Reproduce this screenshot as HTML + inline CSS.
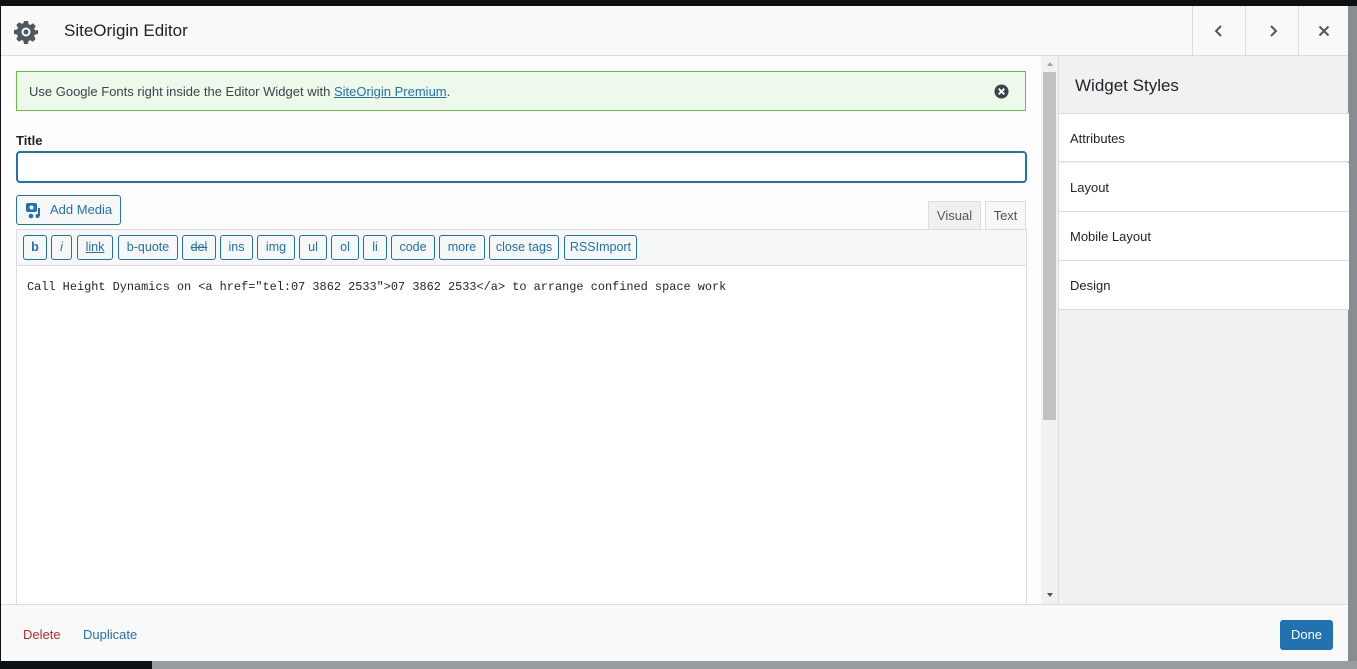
<!DOCTYPE html>
<html><head><meta charset="utf-8"><style>
*{box-sizing:border-box;margin:0;padding:0}
body{width:1357px;height:669px;background:#0e1114;position:relative;overflow:hidden;font-family:"Liberation Sans",sans-serif;font-size:13px;color:#1d2327}
.abs{position:absolute}
.bgR{left:1348px;top:6px;width:9px;height:663px;background:#8a8d90}
.bgB{left:152px;top:661px;width:1205px;height:8px;background:#9a9da0}
.modal{left:1px;top:6px;width:1347px;height:655px;background:#f9f9f9}
.hdr{left:0;top:0;width:1347px;height:50px;border-bottom:1px solid #dcdcde;background:#f9f9f9}
.hb{top:0;height:49px;border-left:1px solid #dcdcde;display:flex;align-items:center;justify-content:center;color:#50575e}
.main{left:0;top:50px;width:1040px;height:548px;background:#fdfdfd}
.sb{left:1040px;top:50px;width:17px;height:548px;background:#f1f1f1}
.side{left:1057px;top:50px;width:290px;height:548px;background:#f1f1f1;border-left:1px solid #dcdcde}
.si{left:0;width:290px;height:49px;background:#fff;border-bottom:1px solid #dcdcde;padding-left:11px;line-height:49px;font-size:13px;color:#1d2327}
.btn{position:absolute;top:235px;height:25px;border:1px solid #2271b1;border-radius:3px;color:#2271b1;background:#f6f7f7;font-size:12.5px;line-height:23px;text-align:center}
.foot{left:0;top:598px;width:1347px;height:57px;border-top:1px solid #dcdcde;background:#f9f9f9}
</style></head><body>
<div class="abs bgR"></div><div class="abs bgB"></div>
<div class="abs modal">
 <div class="abs hdr">
  <svg class="abs" style="left:13px;top:14px" width="24" height="24" viewBox="0 0 24 24"><path fill="#50575e" fill-rule="evenodd" d="M10 1h4l.6 3.1 1.7.9 2.7-1.7 2.8 2.8-1.7 2.7.9 1.7L24 10v4l-3.1.6-.9 1.7 1.7 2.7-2.8 2.8-2.7-1.7-1.7.9L14 24h-4l-.6-3.1-1.7-.9-2.7 1.7-2.8-2.8 1.7-2.7-.9-1.7L0 14v-4l3.1-.6.9-1.7L2.3 5 5.1 2.2l2.7 1.7 1.7-.9zM12 7.5a4.5 4.5 0 1 0 0 9 4.5 4.5 0 0 0 0-9zM12 9.5a2.5 2.5 0 1 1 0 5 2.5 2.5 0 0 1 0-5z"/></svg>
  <div class="abs" style="left:63px;top:15px;font-size:17px;font-weight:500;color:#1d2327">SiteOrigin Editor</div>
  <div class="abs hb" style="left:1191px;width:53px"><svg width="12" height="14" viewBox="0 0 12 14"><path d="M8 2 3 7l5 5" stroke="#50575e" stroke-width="2" fill="none"/></svg></div>
  <div class="abs hb" style="left:1244px;width:54px"><svg width="12" height="14" viewBox="0 0 12 14"><path d="M4 2l5 5-5 5" stroke="#50575e" stroke-width="2" fill="none"/></svg></div>
  <div class="abs hb" style="left:1297px;width:50px"><svg width="12" height="12" viewBox="0 0 12 12"><path d="M1.5 1.5l9 9M10.5 1.5l-9 9" stroke="#50575e" stroke-width="2"/></svg></div>
 </div>
 <div class="abs main"></div>
 <div class="abs sb"><div style="position:absolute;left:6px;top:6px;border:3px solid transparent;border-bottom:4px solid #a3a3a3;border-top:0"></div><div style="position:absolute;left:2px;top:16px;width:13px;height:348px;background:#c1c1c1"></div><div style="position:absolute;left:6px;top:537px;border:3px solid transparent;border-top:4px solid #505050;border-bottom:0"></div></div>
 <div class="abs side">
  <div class="abs" style="left:16px;top:20px;font-size:17px;color:#1d2327">Widget Styles</div>
  <div class="abs si" style="top:57px;border-top:1px solid #dcdcde">Attributes</div>
  <div class="abs si" style="top:107px">Layout</div>
  <div class="abs si" style="top:156px">Mobile Layout</div>
  <div class="abs si" style="top:205px">Design</div>
 </div>
 <div class="abs" style="left:15px;top:65px;width:1010px;height:40px;background:#edfaeb;border:1px solid #68c13f"></div>
 <div class="abs" style="left:28px;top:78px;color:#3c434a">Use Google Fonts right inside the Editor Widget with <span style="color:#2271b1;text-decoration:underline">SiteOrigin Premium</span>.</div>
 <svg class="abs" style="left:993px;top:78px" width="15" height="15" viewBox="0 0 16 16"><circle cx="8" cy="8" r="7.5" fill="#3c434a"/><path d="M5 5l6 6M11 5l-6 6" stroke="#fff" stroke-width="2"/></svg>
 <div class="abs" style="left:15px;top:127px;font-weight:bold;color:#1d2327">Title</div>
 <div class="abs" style="left:15px;top:145px;width:1011px;height:32px;border:2px solid #2271b1;border-radius:4px;background:#fff"></div>
 <div class="abs" style="left:15px;top:189px;width:105px;height:30px;border:1px solid #2271b1;border-radius:3px;background:#f6f7f7;color:#2271b1;line-height:28px;padding-left:33px">Add Media</div>
 <svg class="abs" style="left:25px;top:196px" width="18" height="17" viewBox="0 0 18 17"><rect x="0" y="1" width="11" height="9" rx="2" fill="#2271b1"/><circle cx="5.5" cy="5.5" r="2" fill="#fff"/><path d="M13 6v8" stroke="#2271b1" stroke-width="2"/><circle cx="11.5" cy="14" r="2" fill="#2271b1"/><circle cx="5" cy="14" r="2.3" fill="#2271b1"/></svg>
 <div class="abs" style="left:927px;top:195px;width:53px;height:29px;background:#f0f0f1;border:1px solid #dcdcde;border-bottom:0;color:#50575e;text-align:center;line-height:28px">Visual</div>
 <div class="abs" style="left:984px;top:195px;width:41px;height:30px;background:#f6f7f7;border:1px solid #dcdcde;border-bottom:0;color:#50575e;text-align:center;line-height:28px">Text</div>
 <div class="abs" style="left:15px;top:223px;width:1011px;height:376px;border:1px solid #dcdcde;background:#fff"></div>
 <div class="abs" style="left:16px;top:224px;width:1009px;height:36px;background:#f6f7f7;border-bottom:1px solid #dcdcde"></div>
</div>
<div class="btn" style="left:23px;width:24px;font-weight:bold">b</div>
<div class="btn" style="left:51px;width:21px;font-style:italic">i</div>
<div class="btn" style="left:77px;width:36px;text-decoration:underline">link</div>
<div class="btn" style="left:118px;width:60px">b-quote</div>
<div class="btn" style="left:182px;width:34px;text-decoration:line-through">del</div>
<div class="btn" style="left:220px;width:33px">ins</div>
<div class="btn" style="left:257px;width:38px">img</div>
<div class="btn" style="left:299px;width:28px">ul</div>
<div class="btn" style="left:331px;width:28px">ol</div>
<div class="btn" style="left:363px;width:24px">li</div>
<div class="btn" style="left:391px;width:44px">code</div>
<div class="btn" style="left:439px;width:46px">more</div>
<div class="btn" style="left:489px;width:70px">close tags</div>
<div class="btn" style="left:564px;width:73px">RSSImport</div>
<div class="abs" style="left:27px;top:280px;font-family:'Liberation Mono',monospace;font-size:11.9px;color:#1d2327;white-space:pre">Call Height Dynamics on &lt;a href="tel:07 3862 2533"&gt;07 3862 2533&lt;/a&gt; to arrange confined space work</div>
<div class="abs foot" style="left:1px;top:604px"></div>
<div class="abs" style="left:23px;top:627px;color:#b32d2e">Delete</div>
<div class="abs" style="left:83px;top:627px;color:#2271b1">Duplicate</div>
<div class="abs" style="left:1280px;top:620px;width:53px;height:30px;background:#2271b1;border-radius:3px;color:#fff;text-align:center;line-height:30px">Done</div>
</body></html>
